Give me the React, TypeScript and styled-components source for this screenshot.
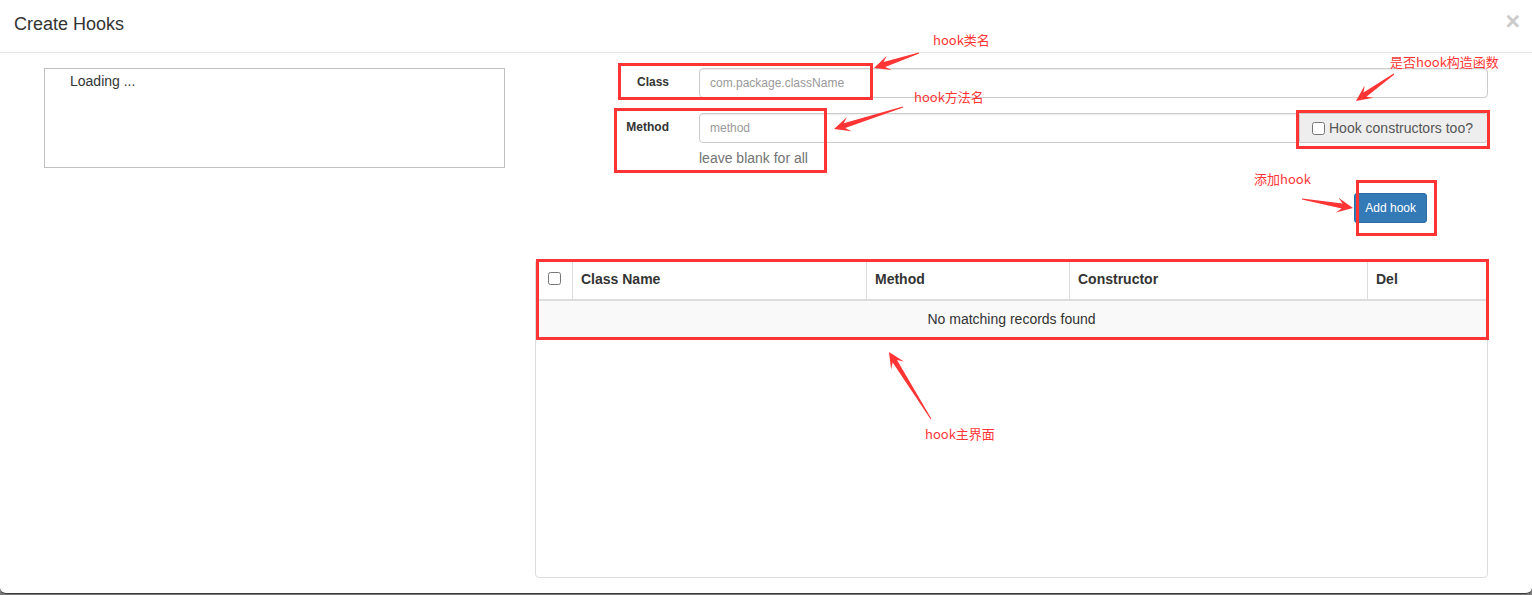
import React from "react";
import styled, { createGlobalStyle } from "styled-components";

const GlobalStyle = createGlobalStyle`
  * { box-sizing: border-box; }
  html, body { margin: 0; padding: 0; }
  body {
    background: #7a7a7a;
    font-family: "Liberation Sans", Arial, Helvetica, sans-serif;
    font-size: 14px;
    color: #333;
  }
`;

const Page = styled.div`
  position: relative;
  width: 1532px;
  height: 595px;
  overflow: hidden;
`;

const Modal = styled.div`
  width: 1532px;
  height: 594px;
  background: #fff;
  border-bottom: 1px solid #3a3a3a;
  border-radius: 0 0 6px 6px;
  display: flex;
  flex-direction: column;
`;

const Header = styled.div`
  height: 53px;
  flex: none;
  display: flex;
  align-items: flex-start;
  padding: 11px 12px 0 14px;
  border-bottom: 1px solid #e5e5e5;
`;

const Title = styled.h4`
  margin: 0;
  font-size: 18px;
  font-weight: normal;
  line-height: 26px;
  color: #333;
`;

const Close = styled.button`
  margin-left: auto;
  margin-top: -2px;
  padding: 0;
  border: 0;
  background: transparent;
  font-family: "Liberation Sans", Arial, sans-serif;
  font-size: 25px;
  font-weight: bold;
  line-height: 1;
  color: #000;
  opacity: 0.2;
`;

const Body = styled.div`
  display: grid;
  grid-template-columns: 461px 1fr;
  column-gap: 30px;
  padding: 15px 44px 0 44px;
  align-items: start;
`;

const TreeBox = styled.div`
  height: 100px;
  border: 1px solid #c0c0c0;
  padding: 2px 0 0 25px;
  line-height: 20px;
  font-size: 14px;
  color: #333;
`;

const RightCol = styled.div`
  display: flex;
  flex-direction: column;
`;

const FormRow = styled.div<{ $mb?: number }>`
  display: grid;
  grid-template-columns: 134px 1fr;
  column-gap: 30px;
  margin-bottom: ${(p) => p.$mb ?? 0}px;
`;

const Label = styled.label`
  text-align: right;
  font-size: 12px;
  font-weight: bold;
  line-height: 28px;
  color: #333;
`;

const Field = styled.div`
  display: flex;
  flex-direction: column;
`;

const InputGroup = styled.div`
  display: flex;
  height: 30px;
`;

const TextInput = styled.input<{ $joined?: boolean }>`
  flex: 1;
  min-width: 0;
  height: 30px;
  padding: 5px 10px;
  border: 1px solid #ccc;
  border-radius: ${(p) => (p.$joined ? "4px 0 0 4px" : "4px")};
  font-family: "Liberation Sans", Arial, sans-serif;
  font-size: 12px;
  color: #555;
  background: #fff;
  box-shadow: inset 0 1px 1px rgba(0, 0, 0, 0.075);
  outline: none;
  &::placeholder { color: #999; }
`;

const Addon = styled.label`
  flex: none;
  width: 188px;
  height: 30px;
  display: flex;
  align-items: center;
  padding: 0 12px;
  gap: 4px;
  background: #eee;
  border: 1px solid #ccc;
  border-left: 0;
  border-radius: 0 4px 4px 0;
  font-size: 14px;
  color: #555;
  white-space: nowrap;
`;

const Check = styled.input`
  margin: 0;
  width: 13px;
  height: 13px;
`;

const Help = styled.span`
  margin-top: 5px;
  line-height: 20px;
  font-size: 14px;
  color: #737373;
`;

const ButtonRow = styled.div`
  display: flex;
  justify-content: flex-end;
  padding-right: 61px;
  margin-top: 25px;
`;

const PrimaryButton = styled.button`
  height: 30px;
  padding: 5px 10px;
  border: 1px solid #2e6da4;
  border-radius: 3px;
  background: #337ab7;
  color: #fff;
  font-family: "Liberation Sans", Arial, sans-serif;
  font-size: 12px;
  line-height: 18px;
`;

const Panel = styled.div`
  margin-top: 36px;
  height: 319px;
  border: 1px solid #ddd;
  border-radius: 4px;
  overflow: hidden;
`;

const Table = styled.table`
  width: 100%;
  table-layout: fixed;
  border-collapse: separate;
  border-spacing: 0;
`;

const Th = styled.th<{ $first?: boolean }>`
  padding: 9px 8px 10px 8px;
  text-align: ${(p) => (p.$first ? "center" : "left")};
  font-size: 14px;
  font-weight: bold;
  line-height: 20px;
  color: #333;
  border-bottom: 2px solid #ddd;
  border-left: ${(p) => (p.$first ? "0" : "1px solid #ddd")};
  vertical-align: middle;
`;

const EmptyCell = styled.td`
  padding: 8px;
  text-align: center;
  line-height: 20px;
  font-size: 14px;
  color: #333;
  background: #f9f9f9;
  border-bottom: 1px solid #ddd;
`;

const HeadCheck = styled.input`
  margin: 0;
  width: 13px;
  height: 13px;
  vertical-align: middle;
  position: relative;
  top: -2px;
`;

/* ---------- annotation overlay ---------- */

const Overlay = styled.div`
  position: absolute;
  inset: 0;
  pointer-events: none;
`;

const Mark = styled.div<{ $x: number; $y: number; $w: number; $h: number }>`
  position: absolute;
  left: ${(p) => p.$x}px;
  top: ${(p) => p.$y}px;
  width: ${(p) => p.$w}px;
  height: ${(p) => p.$h}px;
  border: 3px solid #ff3535;
`;

const Note = styled.span<{ $x: number; $y: number }>`
  position: absolute;
  left: ${(p) => p.$x}px;
  top: ${(p) => p.$y}px;
  font-family: "Noto Sans CJK SC", "Liberation Sans", sans-serif;
  font-size: 13px;
  line-height: 14px;
  color: #ff3535;
  white-space: nowrap;
`;

const ArrowLayer = styled.svg`
  position: absolute;
  left: 0;
  top: 0;
`;

function arrowPoints(x1: number, y1: number, x2: number, y2: number): string {
  const dx = x2 - x1;
  const dy = y2 - y1;
  const L = Math.hypot(dx, dy);
  const ux = dx / L;
  const uy = dy / L;
  const nx = -uy;
  const ny = ux;
  const P = (t: number, w: number) =>
    `${(x1 + ux * t + nx * w).toFixed(1)},${(y1 + uy * t + ny * w).toFixed(1)}`;
  return [
    P(0, -0.5),
    P(L - 11, -2.5),
    P(L - 16, -7.5),
    P(L, 0),
    P(L - 16, 7.5),
    P(L - 11, 2.5),
    P(0, 0.5),
  ].join(" ");
}

const arrows: [number, number, number, number][] = [
  [919, 53, 874, 68],
  [903, 107, 834, 129],
  [1394, 74, 1356, 101],
  [1302, 199, 1353, 208],
  [931, 419, 889, 352],
];

const marks = [
  { x: 618, y: 63, w: 255, h: 37 },
  { x: 614, y: 108, w: 213, h: 65 },
  { x: 1296, y: 110, w: 194, h: 39 },
  { x: 1356, y: 180, w: 81, h: 56 },
  { x: 536, y: 259, w: 953, h: 81 },
];

const notes = [
  { x: 933, y: 33, text: "hook类名" },
  { x: 914, y: 90, text: "hook方法名" },
  { x: 1390, y: 55, text: "是否hook构造函数" },
  { x: 1254, y: 172, text: "添加hook" },
  { x: 925, y: 427, text: "hook主界面" },
];

export default function App() {
  return (
    <>
      <GlobalStyle />
      <Page>
        <Modal>
          <Header>
            <Title>Create Hooks</Title>
            <Close aria-label="Close">×</Close>
          </Header>
          <Body>
            <TreeBox>Loading ...</TreeBox>
            <RightCol>
              <FormRow $mb={15}>
                <Label>Class</Label>
                <TextInput placeholder="com.package.className" />
              </FormRow>
              <FormRow>
                <Label>Method</Label>
                <Field>
                  <InputGroup>
                    <TextInput $joined placeholder="method" />
                    <Addon>
                      <Check type="checkbox" />
                      Hook constructors too?
                    </Addon>
                  </InputGroup>
                  <Help>leave blank for all</Help>
                </Field>
              </FormRow>
              <ButtonRow>
                <PrimaryButton>Add hook</PrimaryButton>
              </ButtonRow>
              <Panel>
                <Table>
                  <colgroup>
                    <col style={{ width: 36 }} />
                    <col style={{ width: 294 }} />
                    <col style={{ width: 203 }} />
                    <col style={{ width: 298 }} />
                    <col />
                  </colgroup>
                  <thead>
                    <tr>
                      <Th $first>
                        <HeadCheck type="checkbox" />
                      </Th>
                      <Th>Class Name</Th>
                      <Th>Method</Th>
                      <Th>Constructor</Th>
                      <Th>Del</Th>
                    </tr>
                  </thead>
                  <tbody>
                    <tr>
                      <EmptyCell colSpan={5}>No matching records found</EmptyCell>
                    </tr>
                  </tbody>
                </Table>
              </Panel>
            </RightCol>
          </Body>
        </Modal>
        <Overlay>
          <ArrowLayer width={1532} height={595} viewBox="0 0 1532 595">
            {arrows.map((a, i) => (
              <polygon key={i} points={arrowPoints(a[0], a[1], a[2], a[3])} fill="#ff3535" />
            ))}
          </ArrowLayer>
          {marks.map((m, i) => (
            <Mark key={i} $x={m.x} $y={m.y} $w={m.w} $h={m.h} />
          ))}
          {notes.map((n, i) => (
            <Note key={i} $x={n.x} $y={n.y}>
              {n.text}
            </Note>
          ))}
        </Overlay>
      </Page>
    </>
  );
}
